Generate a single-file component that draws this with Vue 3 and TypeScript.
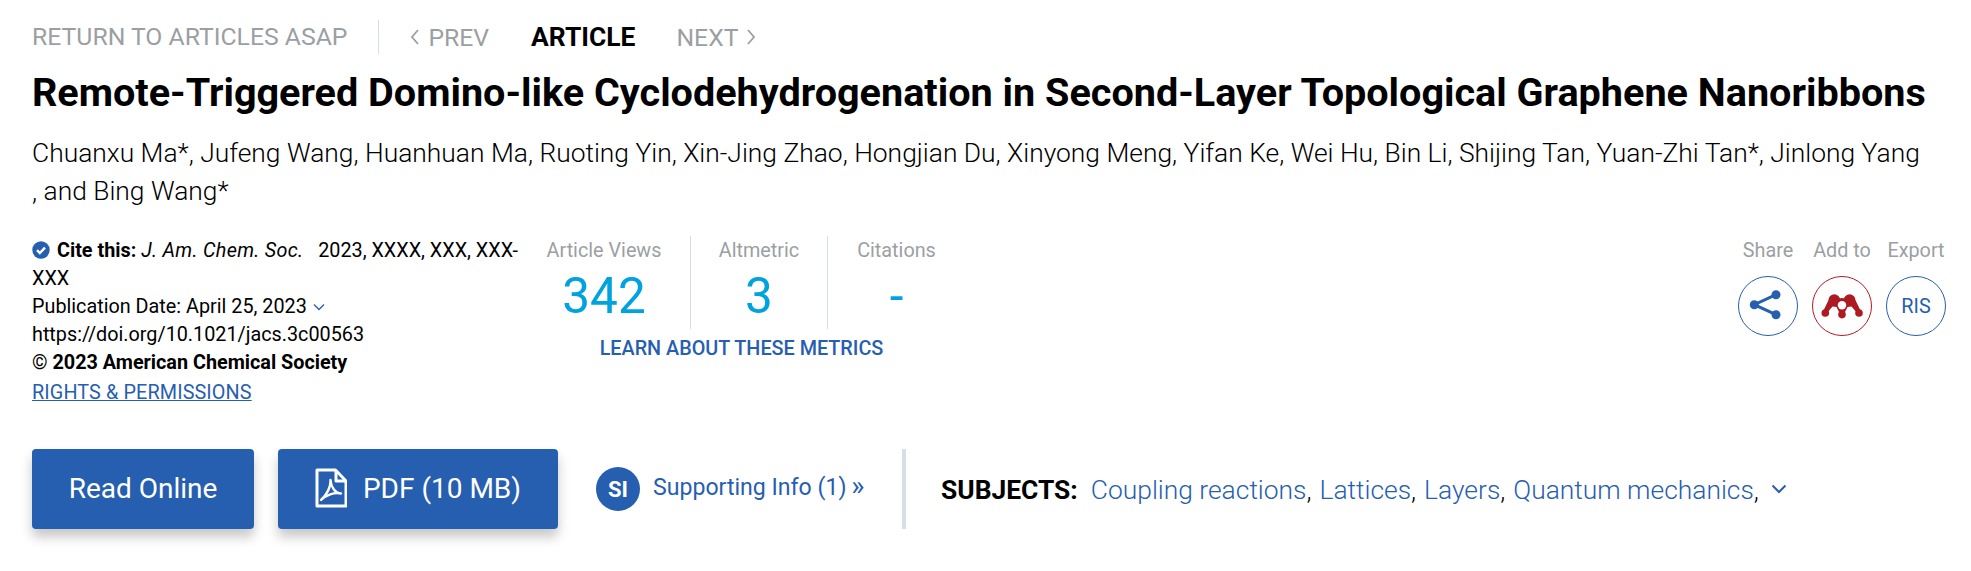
<script setup lang="ts">
const metrics = [
  { label: 'Article Views', value: '342' },
  { label: 'Altmetric', value: '3' },
  { label: 'Citations', value: '-' },
]
const subjects = ['Coupling reactions', 'Lattices', 'Layers', 'Quantum mechanics']
</script>

<template>
  <div class="page">
    <nav class="nav">
      <a class="nav-back">RETURN TO ARTICLES ASAP</a>
      <a class="nav-link nav-prev">
        <svg class="nav-arrow" viewBox="0 0 10 18"><path d="M8 2 2 9l6 7" /></svg>
        PREV
      </a>
      <a class="nav-current">ARTICLE</a>
      <a class="nav-link nav-next">
        NEXT
        <svg class="nav-arrow" viewBox="0 0 10 18"><path d="M2 2l6 7-6 7" /></svg>
      </a>
    </nav>

    <h1 class="title">Remote-Triggered Domino-like Cyclodehydrogenation in Second-Layer Topological Graphene Nanoribbons</h1>
    <div class="authors">
      <div>Chuanxu Ma*, Jufeng Wang, Huanhuan Ma, Ruoting Yin, Xin-Jing Zhao, Hongjian Du, Xinyong Meng, Yifan Ke, Wei Hu, Bin Li, Shijing Tan, Yuan-Zhi Tan*, Jinlong Yang</div>
      <div>, and Bing Wang*</div>
    </div>

    <section class="info">
      <div class="cite">
        <div class="cite-line">
          <svg class="badge" viewBox="0 0 18 18">
            <circle cx="9" cy="9" r="8.700" />
            <path d="M5 9.200l2.800 2.800L13 6.600" />
          </svg>
          <b>Cite this:</b> <i class="journal">J. Am. Chem. Soc.</i>&nbsp;&nbsp; 2023, XXXX, XXX, XXX-
        </div>
        <div>XXX</div>
        <div>
          Publication Date: April 25, 2023
          <svg class="date-chevron" viewBox="0 0 12 8"><path d="M1 1.500l5 5 5-5" /></svg>
        </div>
        <div>https://doi.org/10.1021/jacs.3c00563</div>
        <div>© <b>2023 American Chemical Society</b></div>
        <a class="rights">RIGHTS &amp; PERMISSIONS</a>
      </div>

      <div class="metrics">
        <div class="metric-row">
          <div v-for="m in metrics" :key="m.label" class="metric">
            <div class="metric-label">{{ m.label }}</div>
            <div class="metric-value">{{ m.value }}</div>
          </div>
        </div>
        <a class="learn">LEARN ABOUT THESE METRICS</a>
      </div>

      <div class="tools">
        <div class="tool">
          <span class="tool-label">Share</span>
          <span class="tool-circle">
            <svg class="share-icon" width="32" height="32" viewBox="0 0 32 32">
              <path class="share-line" d="M24 4.700 2.300 14.700 24 24.700" />
              <circle class="share-dot" cx="24" cy="4.700" r="4.500" />
              <circle class="share-dot" cx="2.300" cy="14.700" r="4.500" />
              <circle class="share-dot" cx="24" cy="24.700" r="4.500" />
            </svg>
          </span>
        </div>
        <div class="tool">
          <span class="tool-label">Add to</span>
          <span class="tool-circle red">
            <svg width="42" height="25" viewBox="0 0 42 25">
              <circle class="mendeley" cx="13.300" cy="6" r="5.800" />
              <circle class="mendeley" cx="28.600" cy="6" r="5.800" />
              <path class="mendeley" d="M7.600 6 2.500 16.500l3.500 2.500L11.500 12.500 15.500 13 18.500 19h5l3-6 4-.5L36 19l3.500-2.500L34.400 6 21 4z" />
              <circle class="mendeley" cx="4.300" cy="19" r="3.800" />
              <circle class="mendeley" cx="21" cy="20.600" r="3.800" />
              <circle class="mendeley" cx="38" cy="19" r="3.800" />
              <circle cx="21" cy="11.300" r="4.200" fill="#fff" />
            </svg>
          </span>
        </div>
        <div class="tool">
          <span class="tool-label">Export</span>
          <span class="tool-circle">RIS</span>
        </div>
      </div>
    </section>

    <section class="actions">
      <a class="btn btn-read">Read Online</a>
      <a class="btn btn-pdf">
        <svg class="pdf-icon" viewBox="0 0 32 40">
          <path d="M2 2h18.500L31 13v25H2z" />
          <path d="M21 2v11h10" />
          <path d="M6 32C11 28 16 19 15.500 12 16 19 20 25 26 25.500 19 24 11 27 6 32z" />
        </svg>
        PDF (10 MB)
      </a>
      <a class="si">
        <span class="si-dot">SI</span>
        <span class="si-text">Supporting Info (1) <span class="si-more">»</span></span>
      </a>
      <div class="subjects">
        <b class="subjects-title">SUBJECTS:</b>
        <span v-for="s in subjects" :key="s" class="subject"><a>{{ s }}</a>, </span>
        <svg class="subjects-chevron" viewBox="0 0 16 10"><path d="M1.500 1.500 8 8l6.500-6.500" /></svg>
      </div>
    </section>
  </div>
</template>

<style>
html, body {
  background: #fff;
}
</style>

<style scoped>
.page {
  box-sizing: border-box;
  width: 1971px;
  height: 571px;
  padding: 19px 25px 0 32px;
  overflow: hidden;
  font-family: Roboto, "Liberation Sans", sans-serif;
  color: #000;
}

.nav {
  display: flex;
  align-items: center;
  height: 36px;
  font-size: 24.750px;
  color: #9b9fa3;
}

.nav-back {
  padding-right: 31px;
  border-right: 1px solid #d5dfe6;
  line-height: 34px;
}

.nav-link {
  display: flex;
  align-items: center;
  gap: 8px;
}

.nav-prev {
  margin-left: 31px;
}

.nav-next {
  margin-left: 41px;
}

.nav-arrow {
  width: 10px;
  height: 18px;
  fill: none;
  stroke: #9b9fa3;
  stroke-width: 1.800;
}

.nav-current {
  margin-left: 42px;
  font-size: 26.400px;
  font-weight: 700;
  color: #000;
}

.title {
  margin: 15px 0 0;
  font-size: 39.600px;
  line-height: 46px;
  font-weight: 700;
  white-space: nowrap;
}

.authors {
  margin: 18px 0 0;
  font-size: 26.400px;
  line-height: 38px;
  font-weight: 300;
}

.info {
  display: flex;
  align-items: flex-start;
  margin-top: 26px;
}

.cite {
  width: 486px;
  flex: none;
  padding-top: 1px;
  font-size: 19.800px;
  line-height: 28px;
}

.cite-line {
  white-space: nowrap;
}

.journal {
  letter-spacing: 0.3px;
}

.badge {
  width: 18px;
  height: 18px;
  margin-right: 7px;
  vertical-align: -2px;
}

.badge circle {
  fill: #265eb0;
}

.badge path {
  fill: none;
  stroke: #fff;
  stroke-width: 2.400;
}

.date-chevron {
  width: 12px;
  height: 8px;
  margin-left: 1px;
  vertical-align: 2px;
  fill: none;
  stroke: #265eb0;
  stroke-width: 1.300;
}

.rights {
  display: block;
  margin-top: 2px;
  letter-spacing: 0.12px;
  color: #265eb0;
  text-decoration: underline;
}

.metrics {
  width: 447px;
  flex: none;
  text-align: center;
}

.metric-row {
  display: flex;
  height: 93px;
}

.metric {
  box-sizing: border-box;
  border-right: 1px solid #d5dfe6;
}

.metric:nth-child(1) {
  width: 173px;
}

.metric:nth-child(2) {
  width: 137px;
}

.metric:nth-child(3) {
  width: 137px;
  border-right: 0;
}

.metric-label {
  padding-top: 1px;
  font-size: 19.800px;
  line-height: 28px;
  color: #9b9fa3;
}

.metric-value {
  margin-top: 1px;
  font-size: 49.500px;
  line-height: 60px;
  color: #00a3e0;
}

.learn {
  display: block;
  margin-top: 7px;
  font-size: 19.800px;
  line-height: 26px;
  font-weight: 500;
  color: #265eb0;
}

.tools {
  display: flex;
  margin-left: auto;
  padding-top: 1px;
  gap: 14px;
}

.tool {
  display: flex;
  flex-direction: column;
  align-items: center;
}

.tool-label {
  font-size: 19.800px;
  line-height: 28px;
  color: #9b9fa3;
}

.tool-circle {
  box-sizing: border-box;
  display: flex;
  align-items: center;
  justify-content: center;
  width: 60px;
  height: 60px;
  margin-top: 11px;
  border: 1px solid #265eb0;
  border-radius: 50%;
  font-size: 19.800px;
  color: #265eb0;
}

.tool-circle.red {
  border-color: #b31b21;
}

.share-icon {
  overflow: visible;
}

.share-line {
  fill: none;
  stroke: #265eb0;
  stroke-width: 3;
}

.share-dot {
  fill: #265eb0;
}

.mendeley {
  fill: #ad1a22;
}

.actions {
  display: flex;
  align-items: center;
  margin-top: 42px;
}

.btn {
  display: flex;
  align-items: center;
  justify-content: center;
  box-sizing: border-box;
  height: 80px;
  padding-bottom: 2px;
  border-radius: 4px;
  background: #265eb0;
  box-shadow: 0 8px 12px rgba(0, 0, 0, 0.22);
  color: #fff;
  font-size: 28px;
}

.btn-read {
  width: 222px;
}

.btn-pdf {
  width: 280px;
  margin-left: 24px;
  gap: 16px;
}

.pdf-icon {
  width: 32px;
  height: 40px;
  fill: none;
  stroke: #fff;
  stroke-width: 3;
  stroke-linejoin: round;
}

.pdf-icon path:last-child {
  stroke-width: 2.400;
}

.si {
  display: flex;
  align-items: center;
  gap: 13px;
  width: 306px;
  margin-left: 38px;
  font-size: 23.100px;
  color: #265eb0;
}

.si-text {
  margin-bottom: 3px;
}

.si-more {
  font-size: 28px;
  line-height: 20px;
  margin-left: -1px;
}

.si-dot {
  display: flex;
  align-items: center;
  justify-content: center;
  width: 44px;
  height: 44px;
  border-radius: 50%;
  background: #265eb0;
  color: #fff;
  font-size: 22px;
  font-weight: 700;
}

.subjects {
  display: flex;
  align-items: center;
  box-sizing: border-box;
  height: 80px;
  padding: 2px 0 0 35px;
  border-left: 4px solid #d5dfe6;
  font-size: 26.400px;
  font-weight: 300;
  white-space: pre;
  color: #000;
}

.subjects-title {
  margin-right: 13px;
  font-weight: 700;
}

.subject {
  margin-right: 1.500px;
}

.subject a {
  color: #265eb0;
}

.subjects-chevron {
  width: 16px;
  height: 10px;
  margin: 0 0 2px 4px;
  fill: none;
  stroke: #265eb0;
  stroke-width: 2;
}
</style>
